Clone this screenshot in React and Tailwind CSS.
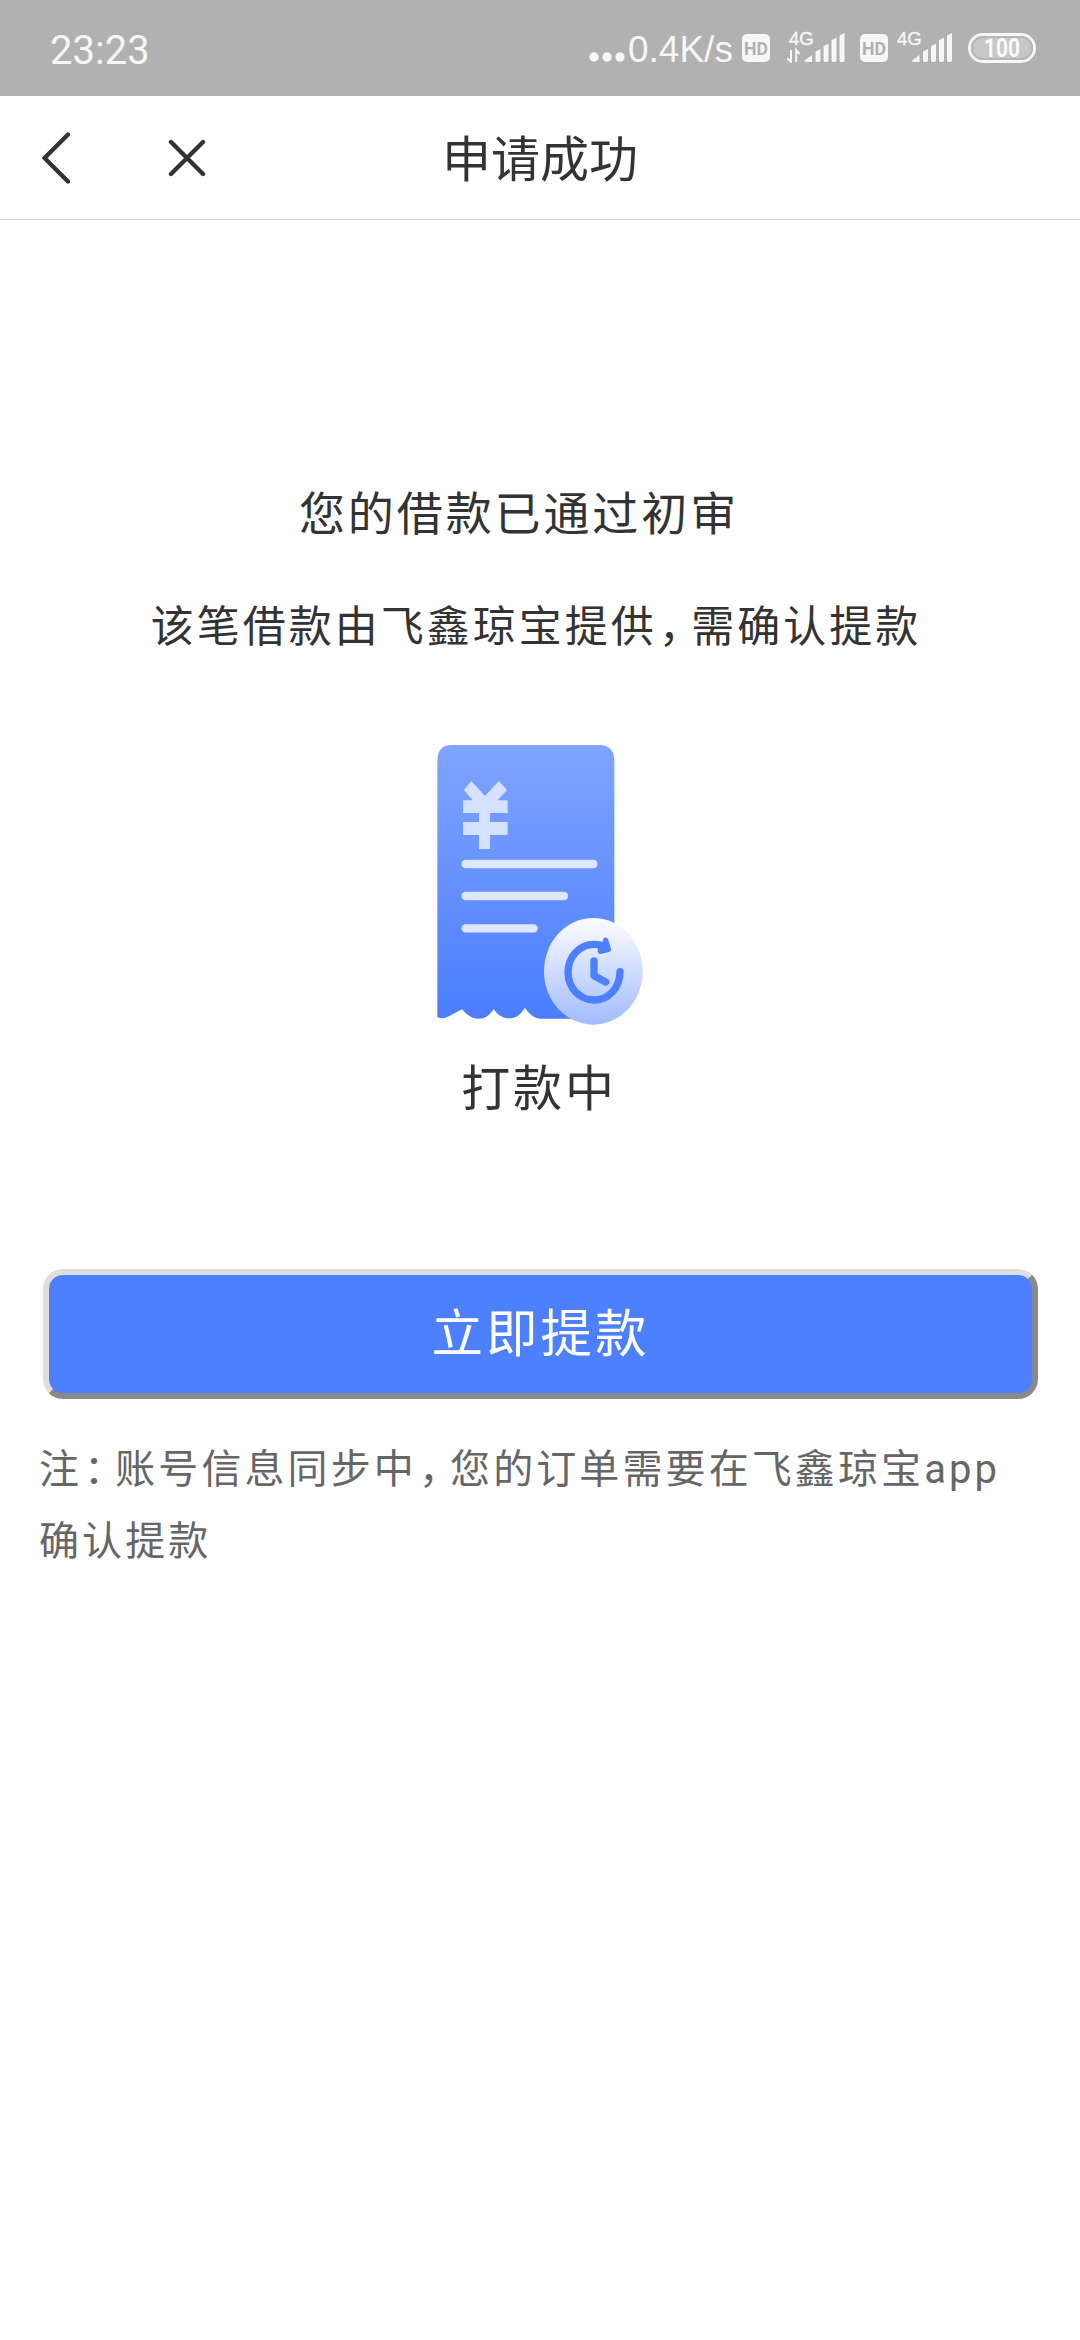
const cjk = "font-['Noto_Sans_CJK_SC',sans-serif]"

function HdBadge({ className }) {
  return (
    <svg width="28" height="28" viewBox="0 0 28 28" className={className}>
      <rect width="28" height="28" rx="5" fill="#f6f6f6" />
      <text
        x="14"
        y="21"
        textAnchor="middle"
        textLength="24"
        lengthAdjust="spacingAndGlyphs"
        fontFamily="Roboto, sans-serif"
        fontSize="18"
        fontWeight="700"
        fill="#b1b1b1"
      >
        HD
      </text>
    </svg>
  )
}

function Signal({ className, arrows }) {
  return (
    <svg width="58" height="38" viewBox="0 -6 58 38" className={className}>
      <text x={arrows ? 2 : 0} y="14" fontFamily="Liberation Sans, sans-serif" fontSize="18.5" fill="#f6f6f6" stroke="#f6f6f6" strokeWidth="0.4">
        4G
      </text>
      {arrows && (
        <path d="M3.8 19V31L0 27.2M9 31V19L12.4 23" transform="translate(0.2 0)" fill="none" stroke="#f6f6f6" strokeWidth="2" />
      )}
      {/* five bars, each with a slanted top */}
      <g fill="#f6f6f6" transform={arrows ? 'translate(1.5 0)' : 'translate(-1 0)'}>
        <path d="M16 29.5L23.5 24V31H17.4Q16 31 16 29.5Z" />
        <path d="M27 20.5L32 18V30L31 31H28L27 30Z" />
        <path d="M35 15.2L40 12.4V30L39 31H36L35 30Z" />
        <path d="M43 9.2L48 6.6V30L47 31H44L43 30Z" />
        <path d="M51 4.4L56 2V30L55 31H52L51 30Z" />
      </g>
    </svg>
  )
}

function Battery({ className }) {
  return (
    <svg width="68" height="30" viewBox="0 0 68 30" className={className}>
      <rect x="1.5" y="1.5" width="65" height="27" rx="13.5" fill="none" stroke="#f6f6f6" strokeWidth="3" />
      <rect x="4" y="4" width="60" height="22" rx="11" fill="#c8c8c8" stroke="#b6b6b6" strokeWidth="2" />
      <text
        x="34"
        y="24"
        textAnchor="middle"
        textLength="36"
        lengthAdjust="spacingAndGlyphs"
        fontFamily="Roboto, sans-serif"
        fontSize="25"
        fontWeight="700"
        fill="#fafafa"
      >
        100
      </text>
    </svg>
  )
}

function StatusBar() {
  return (
    <div className="flex h-24 items-start bg-[#b1b1b1] text-[#f6f6f6]">
      <span className="ml-[50px] mt-[27px] font-['Roboto',sans-serif] text-[40px] leading-[47px]">23:23</span>
      <div className="ml-auto mr-[44px] flex items-start">
        <svg width="36" height="10" viewBox="0 0 36 10" className="mt-[52px]" fill="#f6f6f6">
          <circle cx="5" cy="5" r="4.7" />
          <circle cx="18" cy="5" r="4.7" />
          <circle cx="31" cy="5" r="4.7" />
        </svg>
        <span className="ml-[3px] mt-[29px] w-[107px] whitespace-nowrap font-['Liberation_Sans',sans-serif] text-[37px] leading-[42px]">
          0.4K/s
        </span>
        <HdBadge className="ml-[7px] mt-[34px]" />
        <Signal className="ml-[17px] mt-[25px]" arrows />
        <HdBadge className="ml-[15px] mt-[34px]" />
        <Signal className="ml-[9px] mt-[25px]" />
        <Battery className="ml-[13px] mt-[33px]" />
      </div>
    </div>
  )
}

function NavBar() {
  return (
    <header className="grid h-[124px] grid-cols-3 items-center border-b border-[#d8d8d8]">
      <div className="flex items-center">
        <svg width="28" height="52" viewBox="0 0 28 52" className="ml-[42px]" fill="none" stroke="#333" strokeWidth="4.4" strokeLinecap="round">
          <path d="M26 2.5L2.5 26L26 49.5" />
        </svg>
        <svg width="38" height="38" viewBox="0 0 38 38" className="ml-[98px]" fill="none" stroke="#333" strokeWidth="4.4" strokeLinecap="round">
          <path d="M3 3L35 35M35 3L3 35" />
        </svg>
      </div>
      <h1 className="-mt-[3px] whitespace-nowrap text-center text-[49px] leading-[72px]">申请成功</h1>
    </header>
  )
}

// full-width punctuation, set narrower than a whole cell
function Punct({ children }) {
  return <span className="pl-[2px] pr-[8px] [font-feature-settings:'halt']">{children}</span>
}

function Receipt() {
  return (
    <svg width="208" height="282" viewBox="48 42 624 846">
      <defs>
        <linearGradient id="paper" x1="0" y1="0" x2="0" y2="1">
          <stop offset="0" stopColor="#80a4ff" />
          <stop offset="1" stopColor="#4a7eff" />
        </linearGradient>
        <linearGradient id="disc" x1="0" y1="0" x2="0" y2="1">
          <stop offset="0" stopColor="#fdfdff" />
          <stop offset="1" stopColor="#a2bbff" />
        </linearGradient>
      </defs>
      <path
        d="M52 95Q52 45 94 45H543Q583 48 583 95V866H362C342 866 326 850 315 833C306 846 293 865 268 865C243 865 230 850 221 838C210 852 200 866 176 866C150 866 138 850 126 838L82 861Q68 868 52 862Z"
        fill="url(#paper)"
      />
      {/* yuan sign */}
      <path
        d="M154 153L195 198L237 153L261 180L233 211H263V249H210V276H263V315H210V357H177V315H129V276H177V249H129V211H158L132 180Z"
        fill="#d6e0ff"
      />
      <g stroke="#dfe7ff" strokeWidth="25" strokeLinecap="round">
        <path d="M137 402H520" />
        <path d="M137 498H432" />
        <path d="M137 595H341" />
      </g>
      <ellipse cx="520" cy="724" rx="148" ry="160" fill="url(#disc)" />
      <g fill="none" stroke="#4c80ff" strokeWidth="22" strokeLinecap="round" strokeLinejoin="round">
        <path d="M600 725C600 774 565 810 522 810C479 810 444 774 444 727C444 680 479 643 522 643Q538 643 552 648" />
        <path d="M522 693V737L557 756" />
      </g>
      <path
        d="M557 631L565 658L541 664L542 648L553 645Z"
        fill="#4c80ff"
        stroke="#4c80ff"
        strokeWidth="16"
        strokeLinejoin="round"
      />
    </svg>
  )
}

export default function App() {
  return (
    <div className={`min-h-[2340px] w-[1080px] bg-[#fefefe] text-[#333] ${cjk}`}>
      <StatusBar />
      <NavBar />

      <main className="flex flex-col items-center">
        <p className="mr-[42px] mt-[255px] whitespace-nowrap text-[46px] leading-[70px] tracking-[2.9px]">
          您的借款已通过初审
        </p>
        <p className="mr-[8px] mt-[45px] whitespace-nowrap text-[43px] leading-[66px] tracking-[3px]">
          该笔借款由飞鑫琼宝提供<Punct>，</Punct>需确认提款
        </p>

        <div className="mt-[88px]">
          <Receipt />
        </div>
        <p className="mr-[2px] mt-[23px] whitespace-nowrap text-[49px] leading-[72px] tracking-[2.8px]">打款中</p>

        <button
          type="button"
          className="ml-[43px] mt-[148px] flex h-[130px] w-[995px] items-start justify-center self-start rounded-[20px] border-[6px] border-t-[#dedede] border-l-[#dedede] border-r-[#898989] border-b-[#898989] bg-[#4c80ff] pt-[17px] text-[51.5px] leading-[76px] tracking-[3px] text-white"
        >
          立即提款
        </button>

        <p className="ml-[39px] mt-[31px] w-[1000px] self-start text-[40px] leading-[72px] tracking-[3.1px] text-[#666]">
          注<Punct>：</Punct>账号信息同步中<Punct>，</Punct>您的订单需要在飞鑫琼宝
          <span className="font-['Roboto',sans-serif] leading-none">app</span>
          <br />
          确认提款
        </p>
      </main>
    </div>
  )
}
